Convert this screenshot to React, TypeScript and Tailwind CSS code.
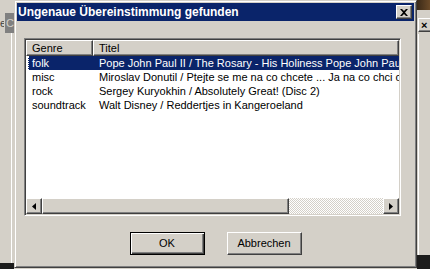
type Match = { genre: string; title: string };

const matches: Match[] = [
  { genre: "folk", title: "Pope John Paul II / The Rosary - His Holiness Pope John Paul II" },
  { genre: "misc", title: "Miroslav Donutil / Ptejte se me na co chcete ... Ja na co chci odpovim" },
  { genre: "rock", title: "Sergey Kuryokhin / Absolutely Great! (Disc 2)" },
  { genre: "soundtrack", title: "Walt Disney / Reddertjes in Kangeroeland" },
];

function ArrowLeftTri() {
  return (
    <svg width="4" height="7" viewBox="0 0 4 7" className="block">
      <path d="M4 0 L0 3.5 L4 7 Z" fill="#000" />
    </svg>
  );
}

function ArrowRightTri() {
  return (
    <svg width="4" height="7" viewBox="0 0 4 7" className="block">
      <path d="M0 0 L4 3.5 L0 7 Z" fill="#000" />
    </svg>
  );
}

export default function App() {
  const raised =
    "border border-t-white border-l-white border-r-[#404040] border-b-[#404040] shadow-[inset_-1px_-1px_0_#808080]";

  return (
    <div className="relative w-[430px] h-[269px] overflow-hidden bg-[#d4d0c8] font-['Liberation_Sans',Arial,sans-serif] text-[11px] text-black">
      {/* background window remnants */}
      <div className="absolute left-0 top-[14px] w-[4px] h-[18px] text-[#404040] leading-[18px] overflow-hidden">e</div>
      <div className="absolute left-[5px] top-[13px] w-[20px] h-[20px] bg-[#808080] text-[#d4d0c8] leading-[20px] pl-[1px]">C</div>
      <div className="absolute left-[11px] top-[33px] w-[1px] h-[230px] bg-white" />
      <div className="absolute left-0 top-[263px] w-[14px] h-[6px] bg-[#1c1c1c]" />
      <div className="absolute right-0 top-0 w-[13px] h-[10px] bg-gradient-to-r from-[#3b2a18] to-[#6b4a28]" />
      <div className={`absolute left-[418px] top-[18px] w-[14px] h-[14px] bg-[#d4d0c8] ${raised} flex items-center pl-[2px] font-bold leading-none`}>
        ×
      </div>
      <div className="absolute left-[418px] top-[34px] w-[1px] h-[221px] bg-white" />
      <div className="absolute right-0 top-[255px] w-[13px] h-[14px] bg-[#1c1c1c]" />

      {/* dialog */}
      <div className="absolute left-[14px] top-0 w-[403px] h-[268px] flex flex-col p-[2px] bg-[#d4d0c8] border border-t-[#d4d0c8] border-l-[#d4d0c8] border-r-[#404040] border-b-[#404040] shadow-[inset_1px_1px_0_#fff,inset_-1px_-1px_0_#808080]">
        <div className="h-[18px] shrink-0 bg-[#0a246a] flex items-center justify-between pl-[1px] pr-[2px]">
          <span className="text-white font-bold text-[12px] leading-none">Ungenaue Übereinstimmung gefunden</span>
          <div className={`w-[16px] h-[14px] bg-[#d4d0c8] ${raised} flex items-center justify-center`}>
            <svg width="8" height="7" viewBox="0 0 8 7">
              <path d="M0 0 L2 0 L4 2 L6 0 L8 0 L5 3.5 L8 7 L6 7 L4 5 L2 7 L0 7 L3 3.5 Z" fill="#000" />
            </svg>
          </div>
        </div>

        <div className="mt-[17px] ml-[7px] w-[377px] h-[178px] shrink-0 flex flex-col bg-white border border-t-[#808080] border-l-[#808080] border-r-white border-b-white shadow-[inset_1px_1px_0_#404040,inset_-1px_-1px_0_#d4d0c8] p-[1px]">
          <div className="flex h-[16px] shrink-0 leading-[14px]">
            <div className={`w-[67px] bg-[#d4d0c8] ${raised} pl-[5px]`}>Genre</div>
            <div className={`flex-1 bg-[#d4d0c8] ${raised} pl-[5px]`}>Titel</div>
          </div>
          <div className="flex-1 flex flex-col overflow-hidden">
            {matches.map((m, i) => (
              <div
                key={m.genre}
                className={`flex h-[14px] shrink-0 leading-[14px] whitespace-nowrap ml-[2px] ${
                  i === 0 ? "bg-[#0a246a] text-white border-l border-dotted border-l-white" : "border-l border-transparent"
                }`}
              >
                <div className="w-[64px] shrink-0 pl-[3px] overflow-hidden">{m.genre}</div>
                <div className="flex-1 pl-[6px] overflow-hidden">{m.title}</div>
              </div>
            ))}
          </div>
          <div className="flex h-[16px] shrink-0">
            <div className={`w-[16px] bg-[#d4d0c8] ${raised} flex items-center justify-center`}>
              <ArrowLeftTri />
            </div>
            <div className={`w-[247px] bg-[#d4d0c8] ${raised}`} />
            <div className="flex-1 bg-[repeating-conic-gradient(#d4d0c8_0_25%,#ffffff_0_50%)] bg-[length:2px_2px]" />
            <div className={`w-[16px] bg-[#d4d0c8] ${raised} flex items-center justify-center`}>
              <ArrowRightTri />
            </div>
          </div>
        </div>

        <div className="mt-[16px] flex justify-center gap-[22px]">
          <button className="w-[75px] h-[23px] bg-[#d4d0c8] border border-black shadow-[inset_1px_1px_0_#fff,inset_-1px_-1px_0_#404040,inset_-2px_-2px_0_#808080] leading-none">
            OK
          </button>
          <button className={`w-[75px] h-[23px] bg-[#d4d0c8] ${raised} leading-none`}>Abbrechen</button>
        </div>
      </div>
    </div>
  );
}
